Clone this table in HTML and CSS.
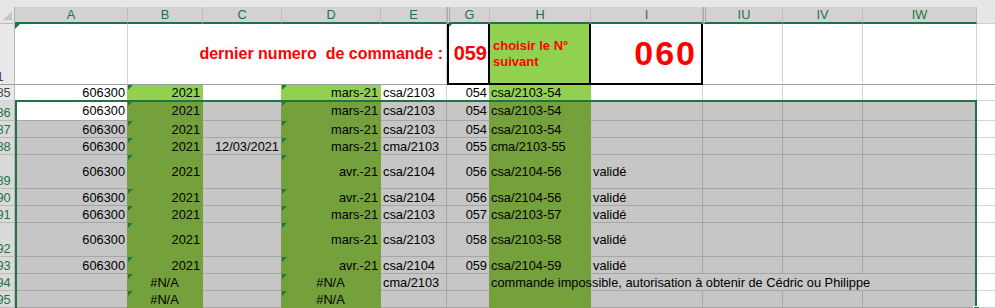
FILE: index.html
```html
<!DOCTYPE html>
<html lang="fr">
<head>
  <meta charset="UTF-8" />
  <meta name="viewport" content="width=device-width, initial-scale=1.0"/>
  <title>Suivi des commandes</title>
  <link rel="stylesheet" href="styles.css">
</head>
<body>
  <div class="gap"></div>

  <div class="sheet">
    <!-- column letters (F and J..IT are hidden) -->
    <div class="row head">
      <div class="corner"></div>
      <div class="colh">A</div>
      <div class="colh">B</div>
      <div class="colh">C</div>
      <div class="colh">D</div>
      <div class="colh">E</div>
      <div class="colh hidden-before">G</div>
      <div class="colh">H</div>
      <div class="colh">I</div>
      <div class="colh hidden-before">IU</div>
      <div class="colh">IV</div>
      <div class="colh">IW</div>
      <div class="colh out"></div>
    </div>

    <!-- frozen row 1 -->
    <div class="row r1">
      <div class="rowh"><span>1</span></div>
      <div class="c flag"></div>
      <div class="c n title">dernier numero&nbsp; de commande :</div>
      <div class="c n box last flag">059</div>
      <div class="c fill box note">choisir le N° suivant</div>
      <div class="c n box next">060</div>
      <div class="c"></div>
      <div class="c"></div>
      <div class="c"></div>
      <div class="c out"></div>
    </div>

    <div class="row r85">
      <div class="rowh"><span>885</span></div>
      <div class="c n">606300</div>
      <div class="c n fill flag">2021</div>
      <div class="c"></div>
      <div class="c n fill flag">mars-21</div>
      <div class="c">csa/2103</div>
      <div class="c n">054</div>
      <div class="c fill">csa/2103-54</div>
      <div class="c"></div>
      <div class="c"></div>
      <div class="c"></div>
      <div class="c"></div>
      <div class="c out"></div>
    </div>

    <div class="row picked first">
      <div class="rowh"><span>886</span></div>
      <div class="c n active">606300</div>
      <div class="c n fill flag">2021</div>
      <div class="c"></div>
      <div class="c n fill flag">mars-21</div>
      <div class="c">csa/2103</div>
      <div class="c n">054</div>
      <div class="c fill">csa/2103-54</div>
      <div class="c"></div>
      <div class="c"></div>
      <div class="c"></div>
      <div class="c"></div>
      <div class="c out"></div>
    </div>

    <div class="row picked">
      <div class="rowh"><span>887</span></div>
      <div class="c n">606300</div>
      <div class="c n fill flag">2021</div>
      <div class="c"></div>
      <div class="c n fill flag">mars-21</div>
      <div class="c">csa/2103</div>
      <div class="c n">054</div>
      <div class="c fill">csa/2103-54</div>
      <div class="c"></div>
      <div class="c"></div>
      <div class="c"></div>
      <div class="c"></div>
      <div class="c out"></div>
    </div>

    <div class="row picked">
      <div class="rowh"><span>888</span></div>
      <div class="c n">606300</div>
      <div class="c n fill flag">2021</div>
      <div class="c n">12/03/2021</div>
      <div class="c n fill flag">mars-21</div>
      <div class="c">cma/2103</div>
      <div class="c n">055</div>
      <div class="c fill">cma/2103-55</div>
      <div class="c"></div>
      <div class="c"></div>
      <div class="c"></div>
      <div class="c"></div>
      <div class="c out"></div>
    </div>

    <div class="row picked tall">
      <div class="rowh"><span>889</span></div>
      <div class="c n">606300</div>
      <div class="c n fill flag">2021</div>
      <div class="c"></div>
      <div class="c n fill flag">avr.-21</div>
      <div class="c">csa/2104</div>
      <div class="c n">056</div>
      <div class="c fill">csa/2104-56</div>
      <div class="c">validé</div>
      <div class="c"></div>
      <div class="c"></div>
      <div class="c"></div>
      <div class="c out"></div>
    </div>

    <div class="row picked">
      <div class="rowh"><span>890</span></div>
      <div class="c n">606300</div>
      <div class="c n fill flag">2021</div>
      <div class="c"></div>
      <div class="c n fill flag">avr.-21</div>
      <div class="c">csa/2104</div>
      <div class="c n">056</div>
      <div class="c fill">csa/2104-56</div>
      <div class="c">validé</div>
      <div class="c"></div>
      <div class="c"></div>
      <div class="c"></div>
      <div class="c out"></div>
    </div>

    <div class="row picked">
      <div class="rowh"><span>891</span></div>
      <div class="c n">606300</div>
      <div class="c n fill flag">2021</div>
      <div class="c"></div>
      <div class="c n fill flag">mars-21</div>
      <div class="c">csa/2103</div>
      <div class="c n">057</div>
      <div class="c fill">csa/2103-57</div>
      <div class="c">validé</div>
      <div class="c"></div>
      <div class="c"></div>
      <div class="c"></div>
      <div class="c out"></div>
    </div>

    <div class="row picked tall">
      <div class="rowh"><span>892</span></div>
      <div class="c n">606300</div>
      <div class="c n fill flag">2021</div>
      <div class="c"></div>
      <div class="c n fill flag">mars-21</div>
      <div class="c">csa/2103</div>
      <div class="c n">058</div>
      <div class="c fill">csa/2103-58</div>
      <div class="c">validé</div>
      <div class="c"></div>
      <div class="c"></div>
      <div class="c"></div>
      <div class="c out"></div>
    </div>

    <div class="row picked">
      <div class="rowh"><span>893</span></div>
      <div class="c n">606300</div>
      <div class="c n fill flag">2021</div>
      <div class="c"></div>
      <div class="c n fill flag">avr.-21</div>
      <div class="c">csa/2104</div>
      <div class="c n">059</div>
      <div class="c fill">csa/2104-59</div>
      <div class="c">validé</div>
      <div class="c"></div>
      <div class="c"></div>
      <div class="c"></div>
      <div class="c out"></div>
    </div>

    <div class="row picked">
      <div class="rowh"><span>894</span></div>
      <div class="c"></div>
      <div class="c mid fill flag">#N/A</div>
      <div class="c"></div>
      <div class="c mid fill flag">#N/A</div>
      <div class="c">cma/2103</div>
      <div class="c"></div>
      <div class="c fill spill">commande impossible, autorisation à obtenir de Cédric ou Philippe</div>
      <div class="c nb"></div>
      <div class="c nb"></div>
      <div class="c nb"></div>
      <div class="c"></div>
      <div class="c out"></div>
    </div>

    <div class="row picked">
      <div class="rowh"><span>895</span></div>
      <div class="c"></div>
      <div class="c mid fill flag">#N/A</div>
      <div class="c"></div>
      <div class="c mid fill flag">#N/A</div>
      <div class="c"></div>
      <div class="c"></div>
      <div class="c fill"></div>
      <div class="c"></div>
      <div class="c"></div>
      <div class="c"></div>
      <div class="c"></div>
      <div class="c out"></div>
    </div>

    <!-- selected range A886:IW895 -->
    <div class="selection"></div>
  </div>
</body>
</html>
```

FILE: styles.css
```css
html, body {
  margin: 0;
  overflow: hidden;
  background: #fff;
}
body {
  font-family: "Liberation Sans", Arial, sans-serif;
  font-size: 12.8px;
  color: #000;
}
.gap {
  height: 7px;
  background: #e6e6e6;
}
.sheet {
  position: relative;
}
.row {
  display: grid;
  grid-template-columns: 15px 113px 75px 79px 99px 66px 43px 101px 112px 80px 80px 114px 1fr;
  height: 17px;
}
.row > div {
  box-sizing: border-box;
  min-width: 0;
}

/* column letters */
.head {
  height: 17px;
}
.corner {
  position: relative;
  background: #e6e6e6;
  border-right: 1px solid #b4b4b4;
  border-bottom: 1px solid #bdbdbd;
}
.corner::after {
  content: "";
  position: absolute;
  right: 2px;
  bottom: 3px;
  width: 0;
  height: 0;
  border-left: 9px solid transparent;
  border-bottom: 9px solid #c4c4c4;
}
.colh {
  display: flex;
  align-items: center;
  justify-content: center;
  background: #d3d2d3;
  color: #217346;
  border-right: 1px solid #bcbcbc;
  border-bottom: 2px solid #217346;
}
.colh.hidden-before {
  border-left: 3px double #a9a9a9;
}
.colh.out {
  background: #e6e6e6;
  border-right: none;
  border-bottom: 1px solid #d0d0d0;
}

/* row numbers, centred on a column wider than what is shown */
.rowh {
  display: flex;
  align-items: flex-end;
  overflow: hidden;
  background: #e9e9e9;
  color: #444;
  border-right: 1px solid #b8b8b8;
  border-bottom: 1px solid #d0d0d0;
}
.rowh span {
  flex: none;
  width: 30px;
  margin-left: -15px;
  text-align: center;
  line-height: 15px;
}

/* cells */
.c {
  display: flex;
  align-items: center;
  padding: 0 2px;
  overflow: hidden;
  white-space: nowrap;
  background: #fff;
  border-right: 1px solid #d4d4d4;
  border-bottom: 1px solid #d4d4d4;
}
.n {
  justify-content: flex-end;
}
.mid {
  justify-content: center;
}
.fill {
  background: #92d050;
  border-color: transparent;
  margin-left: -1px;
}
.out {
  border-right: none;
}
.nb {
  border-right-color: transparent;
}
.flag {
  position: relative;
}
.flag::before {
  content: "";
  position: absolute;
  top: 0;
  left: 0;
  width: 0;
  height: 0;
  border-top: 5px solid #1f7a3a;
  border-right: 5px solid transparent;
}
.fill.flag::before {
  left: 1px;
}

/* header row 1 */
.r1 {
  height: 61px;
}
.r1 .rowh,
.r1 .c {
  border-bottom-color: #9e9e9e;
}
.title {
  grid-column: span 4;
  padding-right: 3px;
  color: #f00;
  font-weight: bold;
  font-size: 16px;
}
.r1 .box {
  border-right: 2px solid #000;
  border-bottom: 2px solid #000;
}
.last {
  border-left: 2px solid #000;
  padding-right: 1px;
  color: #f00;
  font-weight: bold;
  font-size: 20px;
}
.last.flag::before {
  left: -2px;
}
.r1 .note {
  margin-left: 0;
  padding-left: 3px;
  white-space: normal;
  color: #f00;
  font-weight: bold;
  font-size: 13px;
  line-height: 16px;
}
.next {
  padding-right: 4px;
  color: #f00;
  font-weight: bold;
  font-size: 34px;
  letter-spacing: 2px;
}

.r85 {
  height: 16px;
}

/* selected rows get the darker selection shade */
.picked .rowh {
  background: #dadada;
  color: #217346;
  border-bottom-color: #bababa;
}
.picked .c {
  background: #c6c6c6;
  border-color: #a6a6a6;
}
.picked .fill {
  background: #75a13c;
  border-color: transparent;
}
.picked .nb {
  border-right-color: transparent;
}
.picked .active {
  background: #fff;
}
.picked .out {
  background: #fff;
  border-color: #d4d4d4;
}
.first {
  height: 20px;
}
.tall {
  height: 34px;
}
.spill {
  position: relative;
  z-index: 1;
  overflow: visible;
}

.selection {
  position: absolute;
  left: 15px;
  top: 93px;
  width: 962px;
  height: 210px;
  box-sizing: border-box;
  border: 2px solid #217346;
  pointer-events: none;
}
.selection::after {
  content: "";
  position: absolute;
  right: -5px;
  bottom: -5px;
  width: 5px;
  height: 5px;
  background: #217346;
  border: 1px solid #fff;
}
```
